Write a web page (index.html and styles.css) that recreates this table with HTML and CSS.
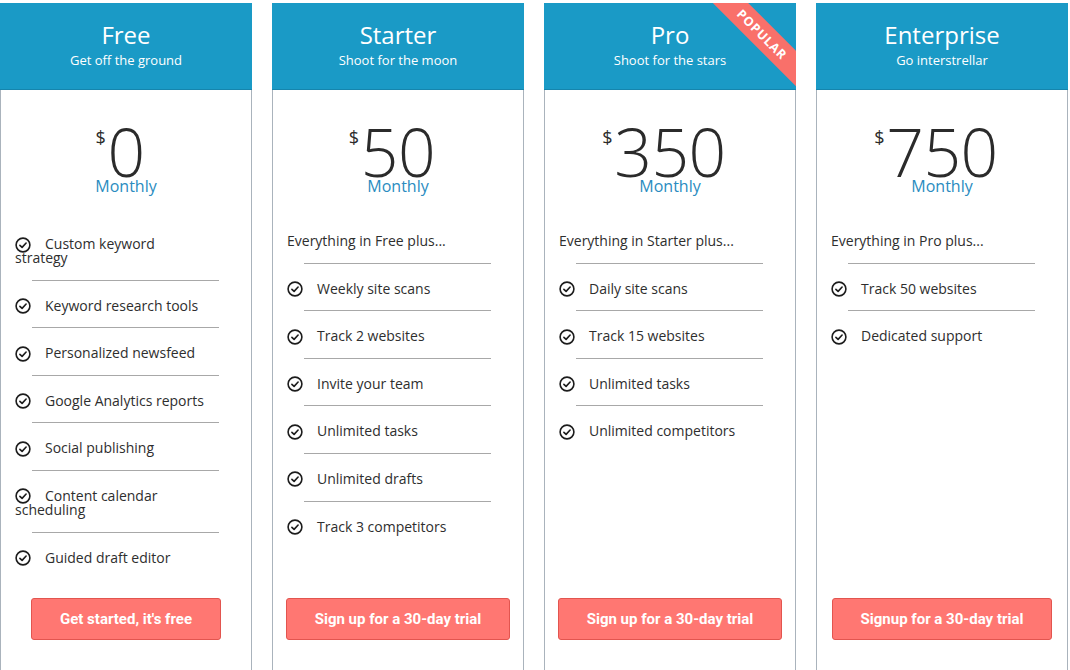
FILE: index.html
```html
<!DOCTYPE html>
<html lang="en">
<head>
<meta charset="utf-8">
<title>Pricing</title>
<link rel="stylesheet" href="styles.css">
</head>
<body>
<div class="pricing">
  <section class="card">
    <header class="card-head">
      <h2 class="plan">Free</h2>
      <p class="tagline">Get off the ground</p>
    </header>
    <div class="price">
      <div class="amount"><span class="num"><span class="cur">$</span>0</span></div>
      <div class="period">Monthly</div>
    </div>
    <ul class="features features-free">
      <li><svg class="ico" viewBox="0 2 16 12"><circle cx="8" cy="8" r="6.9"/><path d="M4.9 8.3 7.1 10.4 11.1 6"/></svg>Custom keyword<br>strategy</li>
      <li><svg class="ico" viewBox="0 2 16 12"><circle cx="8" cy="8" r="6.9"/><path d="M4.9 8.3 7.1 10.4 11.1 6"/></svg>Keyword research tools</li>
      <li><svg class="ico" viewBox="0 2 16 12"><circle cx="8" cy="8" r="6.9"/><path d="M4.9 8.3 7.1 10.4 11.1 6"/></svg>Personalized newsfeed</li>
      <li><svg class="ico" viewBox="0 2 16 12"><circle cx="8" cy="8" r="6.9"/><path d="M4.9 8.3 7.1 10.4 11.1 6"/></svg>Google Analytics reports</li>
      <li><svg class="ico" viewBox="0 2 16 12"><circle cx="8" cy="8" r="6.9"/><path d="M4.9 8.3 7.1 10.4 11.1 6"/></svg>Social publishing</li>
      <li><svg class="ico" viewBox="0 2 16 12"><circle cx="8" cy="8" r="6.9"/><path d="M4.9 8.3 7.1 10.4 11.1 6"/></svg>Content calendar<br>scheduling</li>
      <li><svg class="ico" viewBox="0 2 16 12"><circle cx="8" cy="8" r="6.9"/><path d="M4.9 8.3 7.1 10.4 11.1 6"/></svg>Guided draft editor</li>
    </ul>
    <a class="btn" href="#">Get started, it's free</a>
  </section>

  <section class="card">
    <header class="card-head">
      <h2 class="plan">Starter</h2>
      <p class="tagline">Shoot for the moon</p>
    </header>
    <div class="price">
      <div class="amount"><span class="num"><span class="cur">$</span>50</span></div>
      <div class="period">Monthly</div>
    </div>
    <ul class="features">
      <li class="intro">Everything in Free plus...</li>
      <li><svg class="ico" viewBox="0 2 16 12"><circle cx="8" cy="8" r="6.9"/><path d="M4.9 8.3 7.1 10.4 11.1 6"/></svg>Weekly site scans</li>
      <li><svg class="ico" viewBox="0 2 16 12"><circle cx="8" cy="8" r="6.9"/><path d="M4.9 8.3 7.1 10.4 11.1 6"/></svg>Track 2 websites</li>
      <li><svg class="ico" viewBox="0 2 16 12"><circle cx="8" cy="8" r="6.9"/><path d="M4.9 8.3 7.1 10.4 11.1 6"/></svg>Invite your team</li>
      <li><svg class="ico" viewBox="0 2 16 12"><circle cx="8" cy="8" r="6.9"/><path d="M4.9 8.3 7.1 10.4 11.1 6"/></svg>Unlimited tasks</li>
      <li><svg class="ico" viewBox="0 2 16 12"><circle cx="8" cy="8" r="6.9"/><path d="M4.9 8.3 7.1 10.4 11.1 6"/></svg>Unlimited drafts</li>
      <li><svg class="ico" viewBox="0 2 16 12"><circle cx="8" cy="8" r="6.9"/><path d="M4.9 8.3 7.1 10.4 11.1 6"/></svg>Track 3 competitors</li>
    </ul>
    <a class="btn" href="#">Sign up for a 30-day trial</a>
  </section>

  <section class="card">
    <header class="card-head">
      <h2 class="plan">Pro</h2>
      <p class="tagline">Shoot for the stars</p>
      <span class="ribbon">POPULAR</span>
    </header>
    <div class="price">
      <div class="amount"><span class="num"><span class="cur">$</span>350</span></div>
      <div class="period">Monthly</div>
    </div>
    <ul class="features">
      <li class="intro">Everything in Starter plus...</li>
      <li><svg class="ico" viewBox="0 2 16 12"><circle cx="8" cy="8" r="6.9"/><path d="M4.9 8.3 7.1 10.4 11.1 6"/></svg>Daily site scans</li>
      <li><svg class="ico" viewBox="0 2 16 12"><circle cx="8" cy="8" r="6.9"/><path d="M4.9 8.3 7.1 10.4 11.1 6"/></svg>Track 15 websites</li>
      <li><svg class="ico" viewBox="0 2 16 12"><circle cx="8" cy="8" r="6.9"/><path d="M4.9 8.3 7.1 10.4 11.1 6"/></svg>Unlimited tasks</li>
      <li><svg class="ico" viewBox="0 2 16 12"><circle cx="8" cy="8" r="6.9"/><path d="M4.9 8.3 7.1 10.4 11.1 6"/></svg>Unlimited competitors</li>
    </ul>
    <a class="btn" href="#">Sign up for a 30-day trial</a>
  </section>

  <section class="card">
    <header class="card-head">
      <h2 class="plan">Enterprise</h2>
      <p class="tagline">Go interstrellar</p>
    </header>
    <div class="price">
      <div class="amount"><span class="num"><span class="cur">$</span>750</span></div>
      <div class="period">Monthly</div>
    </div>
    <ul class="features">
      <li class="intro">Everything in Pro plus...</li>
      <li><svg class="ico" viewBox="0 2 16 12"><circle cx="8" cy="8" r="6.9"/><path d="M4.9 8.3 7.1 10.4 11.1 6"/></svg>Track 50 websites</li>
      <li><svg class="ico" viewBox="0 2 16 12"><circle cx="8" cy="8" r="6.9"/><path d="M4.9 8.3 7.1 10.4 11.1 6"/></svg>Dedicated support</li>
    </ul>
    <a class="btn" href="#">Signup for a 30-day trial</a>
  </section>
</div>
</body>
</html>
```

FILE: styles.css
```css
* { box-sizing: border-box; }

html, body {
  margin: 0;
  padding: 0;
  background: #ffffff;
  overflow: hidden;
}

body {
  font-family: "Open Sans", "DejaVu Sans", sans-serif;
  color: #2e2e2e;
}

.pricing {
  display: flex;
  gap: 20px;
  padding-top: 3px;
  width: 1070px;
}

.card {
  width: 252px;
  height: 690px;
  border: 1px solid #aab3bc;
  display: flex;
  flex-direction: column;
  align-items: stretch;
  background: #fff;
}

.card-head {
  position: relative;
  overflow: hidden;
  height: 87px;
  margin: -1px -1px 0;
  background: #1a9ac6;
  border-bottom: 1px solid #1585ad;
  color: #fff;
  text-align: center;
  padding-top: 17px;
}

.plan {
  margin: 0;
  font-size: 24px;
  line-height: 30px;
  font-weight: 400;
}

.tagline {
  margin: 2px 0 0;
  font-size: 13px;
  line-height: 16px;
}

.ribbon {
  position: absolute;
  left: 156px;
  top: 19px;
  width: 124px;
  height: 25px;
  line-height: 25px;
  background: #f9706a;
  color: #fff;
  font-size: 12.5px;
  font-weight: 700;
  letter-spacing: 0.8px;
  text-align: center;
  transform: rotate(45deg);
}

.price {
  text-align: center;
  padding-top: 36px;
}

.amount {
  font-size: 66px;
  line-height: 51px;
  height: 51px;
  font-weight: 300;
  color: #2b2b2b;
  letter-spacing: -0.5px;
}

.num {
  position: relative;
}

.cur {
  position: absolute;
  left: -12px;
  top: 22px;
  font-size: 18px;
  line-height: 18px;
  font-weight: 400;
}

.period {
  font-size: 16px;
  line-height: 18px;
  color: #2a8cbf;
}

.features {
  list-style: none;
  margin: 0;
  padding: 20px 20px 0 14px;
  flex: 1;
  font-size: 14px;
  line-height: 14px;
}

.features-free {
  padding-top: 23px;
}

.features li {
  padding-bottom: 14.6px;
}

.features li::before {
  content: "";
  display: block;
  width: 187px;
  margin: 0 0 18px 17px;
  border-top: 1px solid transparent;
}

.features li + li::before {
  border-top-color: #a8a8a8;
}

.ico {
  width: 16px;
  height: 12px;
  overflow: visible;
  vertical-align: -1.5px;
  margin-right: 14px;
  fill: none;
  stroke: #1c1c1c;
  stroke-width: 1.6;
  stroke-linecap: round;
  stroke-linejoin: round;
}

.btn {
  align-self: center;
  display: block;
  height: 42px;
  line-height: 40px;
  padding: 0 28px;
  margin-bottom: 52px;
  background: #ff7772;
  border: 1px solid #e2554f;
  border-radius: 3px;
  color: #fff;
  text-decoration: none;
  font-family: Roboto, "Liberation Sans", sans-serif;
  font-weight: 700;
  font-size: 15px;
}
```
